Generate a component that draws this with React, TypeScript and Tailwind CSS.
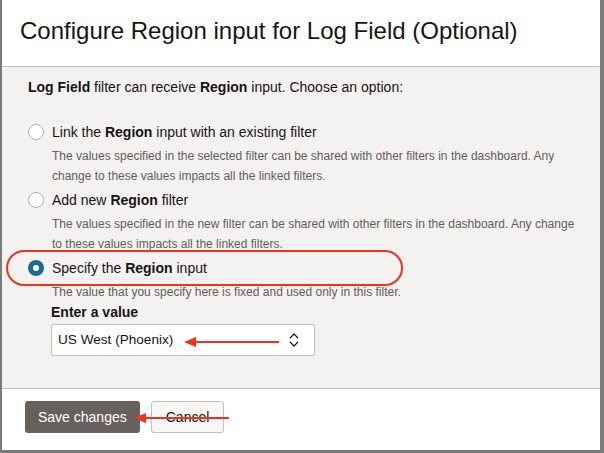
import { ChevronsUpDown } from 'lucide-react';

const font = { fontFamily: '"Liberation Sans", Arial, sans-serif' };

function Radio({ checked }: { checked?: boolean }) {
  if (checked) {
    return (
      <span className="w-[16px] h-[16px] rounded-full bg-[#1b6b8f] flex items-center justify-center flex-shrink-0">
        <span className="w-[6px] h-[6px] rounded-full bg-white" />
      </span>
    );
  }
  return <span className="w-[16px] h-[16px] rounded-full border border-[#b5b1ad] bg-white flex-shrink-0" />;
}

function Option({
  checked,
  label,
  desc,
  children,
  highlight,
}: {
  checked?: boolean;
  label: React.ReactNode;
  desc: string;
  children?: React.ReactNode;
  highlight?: boolean;
}) {
  return (
    <div className="flex flex-col">
      <div className="relative flex items-center gap-[8px] h-[24px]">
        <Radio checked={checked} />
        <span className="text-[14px] text-[#161513]">{label}</span>
        {highlight && (
          <div className="absolute left-[-22px] top-[-6px] w-[397px] h-[36px] rounded-[18px] border-2 border-[#f0321c]" />
        )}
      </div>
      <p className="pl-[24px] mt-[2px] w-[556px] text-[12px] leading-[20px] text-[#625d59]">{desc}</p>
      {children}
    </div>
  );
}

export default function App() {
  return (
    <div className="w-[604px] h-[453px] bg-[#7b7b7b] pl-[2px] pr-[4px] pb-[3px]" style={font}>
      <div className="relative w-full h-full bg-white flex flex-col">
        <div className="h-[67px] flex items-center px-[18px] border-b border-[#c4c1bd] flex-shrink-0">
          <h1 className="text-[24px] text-[#161513] -mt-[4px]">Configure Region input for Log Field (Optional)</h1>
        </div>

        <div className="flex-1 bg-[#f3f2f1] pl-[26px] pt-[10px] border-b border-[#c4c1bd]">
          <p className="text-[14px] leading-[20px] text-[#161513]">
            <b className="font-semibold">Log Field</b> filter can receive <b className="font-semibold">Region</b> input. Choose an option:
          </p>

          <div className="mt-[23px] flex flex-col gap-[2px]">
            <Option
              label={<>Link the <b className="font-semibold">Region</b> input with an existing filter</>}
              desc="The values specified in the selected filter can be shared with other filters in the dashboard. Any change to these values impacts all the linked filters."
            />
            <Option
              label={<>Add new <b className="font-semibold">Region</b> filter</>}
              desc="The values specified in the new filter can be shared with other filters in the dashboard. Any change to these values impacts all the linked filters."
            />
            <Option
              checked
              highlight
              label={<>Specify the <b className="font-semibold">Region</b> input</>}
              desc="The value that you specify here is fixed and used only in this filter."
            >
              <div className="pl-[23px]">
                <div className="text-[14px] leading-[20px] font-semibold text-[#161513]">Enter a value</div>
                <div className="relative mt-[2px] w-[264px] h-[32px] bg-white border border-[#c4c1bd] rounded-[2px] flex items-center justify-between pl-[6px] pr-[11px]">
                  <span className="text-[13.6px] text-[#161513]">US West (Phoenix)</span>
                  <ChevronsUpDown className="w-[18px] h-[18px] text-[#161513]" strokeWidth={1.6} />
                  <svg className="absolute left-[132px] top-[11px]" width="96" height="12" viewBox="0 0 96 12">
                    <line x1="10" y1="6" x2="95" y2="6" stroke="#f0321c" strokeWidth="2" />
                    <polygon points="0,6 12,1 12,11" fill="#f0321c" />
                  </svg>
                </div>
              </div>
            </Option>
          </div>
        </div>

        <div className="h-[61px] flex-shrink-0 flex items-start gap-[11px] pl-[23px] pt-[12px]">
          <button className="relative h-[32px] px-[13px] rounded-[3px] bg-[#67605c] text-[14px] text-white">
            Save changes
          </button>
          <button className="h-[32px] px-[14px] rounded-[3px] border border-[#c4c1bd] bg-[#f8f7f6] text-[14px] text-[#161513]">
            Cancel
          </button>
          <svg className="absolute left-[132px] top-[412px]" width="96" height="12" viewBox="0 0 96 12">
            <line x1="10" y1="6" x2="95" y2="6" stroke="#f0321c" strokeWidth="2" />
            <polygon points="0,6 12,1 12,11" fill="#f0321c" />
          </svg>
        </div>
      </div>
    </div>
  );
}
